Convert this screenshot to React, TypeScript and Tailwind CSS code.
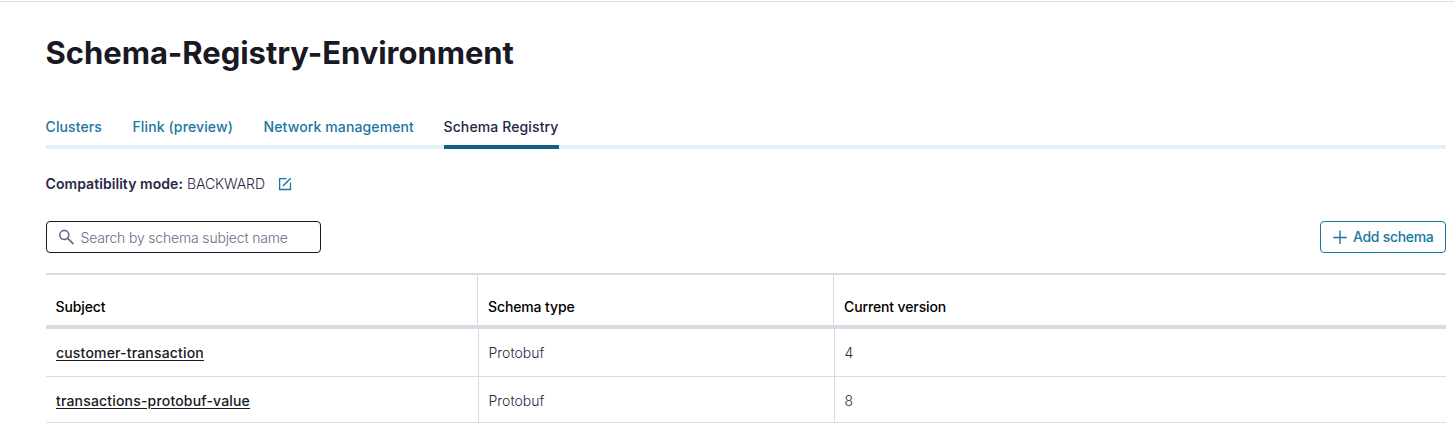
const tabs = [
  { label: "Clusters", box: "w-[57px]" },
  { label: "Flink (preview)", box: "w-[101px]" },
  { label: "Network management", box: "w-[150px]" },
];

const rows = [
  { subject: "customer-transaction", type: "Protobuf", version: "4", height: "h-12" },
  { subject: "transactions-protobuf-value", type: "Protobuf", version: "8", height: "h-[46px]" },
];

function EditIcon() {
  return (
    <svg width="14" height="14" viewBox="0 0 14 14" fill="none" stroke="#1a76a3" strokeWidth="1.3">
      <path d="M8.5 1.6H1.6v10.9h10.9V5.5" />
      <path d="M5 9 12.7 1.3" strokeWidth="1.5" />
    </svg>
  );
}

function SearchIcon() {
  return (
    <svg width="16" height="16" viewBox="0 0 16 16" fill="none" stroke="#6b6b88" strokeWidth="1.6">
      <circle cx="5.3" cy="5.9" r="4.5" />
      <path d="M8.6 9.2 14.5 15.1" strokeWidth="1.8" />
    </svg>
  );
}

function PlusIcon() {
  return (
    <svg width="14" height="14" viewBox="0 0 14 14" fill="none" stroke="#1a76a3" strokeWidth="1.4">
      <path d="M7 .5v13.5M.3 7.5h13.5" />
    </svg>
  );
}

export default function App() {
  return (
    <div className="h-[436px] overflow-hidden bg-white pt-px font-['Inter',sans-serif] text-sm text-[#2a2842]">
      <div className="border-t border-[#d9dcde] pr-2 pl-[46px]">
        <h1 className="mt-[31px] -ml-[0.5px] h-10 text-[31px] leading-10 font-bold tracking-[-0.04px] whitespace-nowrap text-[#191924]">
          Schema-Registry-Environment
        </h1>

        <nav className="mt-[44px] flex h-8 gap-[30px] border-b-4 border-[#e0f2f8] leading-5 font-medium tracking-[0.12px] whitespace-nowrap text-[#1a76a3]">
          {tabs.map((tab) => (
            <a key={tab.label} className={`-indent-[0.5px] ${tab.box}`}>
              {tab.label}
            </a>
          ))}
          <a className="-mb-1 h-8 w-[115px] border-b-4 border-[#135f85] -indent-[0.5px] text-[#1c2745]">
            Schema Registry
          </a>
        </nav>

        <div className="mt-[25px] flex h-5 items-center leading-5 whitespace-nowrap">
          <span className="-ml-[0.5px] font-semibold tracking-[0.06px]">Compatibility mode:</span>
          <span className="ml-1 font-light tracking-[-0.06px]">BACKWARD</span>
          <span className="ml-[13px]">
            <EditIcon />
          </span>
        </div>

        <div className="mt-[27px] flex h-8 justify-between">
          <label className="flex w-[275px] items-center rounded-[4px] border border-[#191924] pl-3">
            <SearchIcon />
            <input
              className="ml-[5.5px] min-w-0 flex-1 bg-transparent pt-0.5 font-light tracking-[-0.17px] outline-none placeholder:text-[#6b6b88]"
              placeholder="Search by schema subject name"
            />
          </label>
          <button className="flex w-[126px] items-center rounded-[4px] border border-[#1a76a3] pl-3 font-medium tracking-[-0.3px] whitespace-nowrap text-[#1a76a3]">
            <PlusIcon />
            <span className="ml-1.5">Add schema</span>
          </button>
        </div>

        <div className="mt-5 border-t-2 border-[#dadae3]">
          <div className="flex h-[54px] border-b-4 border-[#dadae3] leading-5 font-medium tracking-[-0.12px] text-black *:pt-[22px] *:pl-2.5">
            <div className="w-[432px] border-r border-[#dadae3] -indent-[0.5px]">Subject</div>
            <div className="w-[356px] border-r border-[#dadae3]">Schema type</div>
            <div>Current version</div>
          </div>
          {rows.map((row) => (
            <div
              key={row.subject}
              className={`flex border-b border-[#dadae3] leading-5 *:pt-3.5 *:pl-2.5 ${row.height}`}
            >
              <div className="w-[433px] border-r border-[#dadae3] font-medium tracking-[0.18px] text-[#191924]">
                <a className="underline underline-offset-2">{row.subject}</a>
              </div>
              <div className="w-[356px] border-r border-[#dadae3] -indent-[0.5px] font-light">{row.type}</div>
              <div className="-indent-[0.5px] font-light">{row.version}</div>
            </div>
          ))}
        </div>
      </div>
    </div>
  );
}
